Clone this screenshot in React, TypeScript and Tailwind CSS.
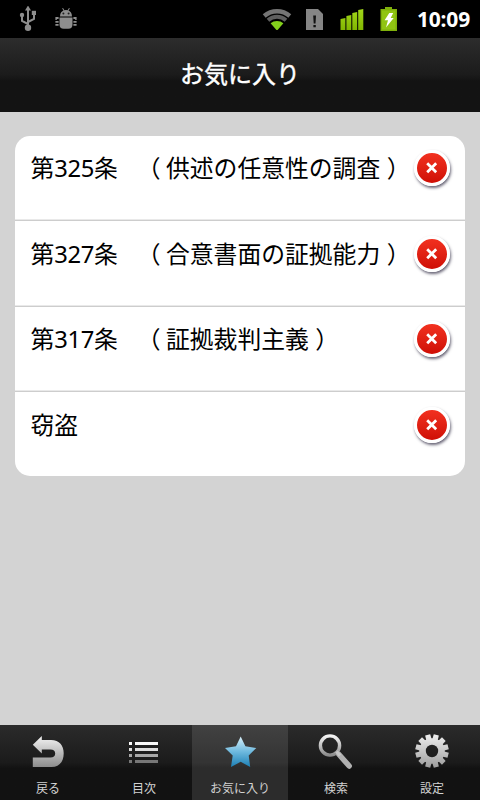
import React from 'react';

interface Favorite {
  id: string;
  prefix: string;
  number?: string;
  suffix?: string;
  title?: string;
}

const favorites: Favorite[] = [
  { id: '325', prefix: '第', number: '325', suffix: '条', title: '供述の任意性の調査' },
  { id: '327', prefix: '第', number: '327', suffix: '条', title: '合意書面の証拠能力' },
  { id: '317', prefix: '第', number: '317', suffix: '条', title: '証拠裁判主義' },
  { id: 'theft', prefix: '窃盗' },
];

const StatusBar: React.FC = () => (
  <div className="flex h-[38px] shrink-0 items-center bg-black">
    {/* USB */}
    <svg className="ml-[19px]" width="18" height="26" viewBox="0 0 18 26" fill="none" stroke="#8e8e8e" strokeWidth="2">
      <path d="M9 22V3M9 18L3 15V10M9 16L15 13V8" />
      <path d="M9 -.5L12 4.5H6Z" fill="#8e8e8e" stroke="none" />
      <circle cx="9" cy="21.7" r="3.2" fill="#8e8e8e" stroke="none" />
      <circle cx="3" cy="9" r="2.2" fill="#8e8e8e" stroke="none" />
      <path d="M12.8 4.8h4.2V9h-4.2Z" fill="#8e8e8e" stroke="none" />
    </svg>
    {/* Debug bug */}
    <svg className="ml-[18px]" width="22" height="22" viewBox="0 0 22 22" fill="#8e8e8e">
      <path d="M5 8.4C5 5 7 3 8.5 2.5L7.1 .6L8 0L9.4 2.2Q11 1.8 12.6 2.2L14 0L14.9 .6L13.5 2.5C15 3 17 5 17 8.4Z" />
      <path d="M4.5 9.4h13v7.1q0 4.2-4.2 4.2H8.7q-4.2 0-4.2-4.2Z" />
      <path d="M.4 9h3.2v1.9H1.8v1H.4ZM.4 13h3.2v1.8H.4ZM.4 16h3.2v1.8H.4ZM21.6 9h-3.2v1.9h1.8v1h1.4ZM18.4 13h3.2v1.8h-3.2ZM18.4 16h3.2v1.8h-3.2Z" />
      <circle cx="8.4" cy="5.6" r="1" fill="#222" />
      <circle cx="13.6" cy="5.6" r="1" fill="#222" />
    </svg>

    <div className="flex-1" />

    {/* Wifi */}
    <svg width="30" height="24" viewBox="0 0 30 24" fill="none">
      <path d="M2.2 9A19.5 19.5 0 0 1 27.8 9" stroke="#757575" strokeWidth="4.4" />
      <path d="M6 13.2A13.8 13.8 0 0 1 24 13.2" stroke="#5f5f5f" strokeWidth="4" />
      <path d="M8.6 16.2A10 10 0 0 1 21.4 16.2L16 22.6Q15 23.6 14 22.6Z" fill="#83d01c" />
    </svg>
    {/* SIM warning */}
    <svg className="ml-[14px]" width="17" height="21" viewBox="0 0 17 21">
      <path d="M0 0H12L17 5V21H0Z" fill="#858585" />
      <path d="M7.2 6.5h2.8l-.5 8H7.7ZM7.4 16h2.4v2.3H7.4Z" fill="#111" />
    </svg>
    {/* Signal */}
    <svg className="ml-[17px] overflow-visible" width="26" height="24" viewBox="0 0 26 24">
      <defs>
        <linearGradient id="signal" x1="0" y1="0" x2="0" y2="24" gradientUnits="userSpaceOnUse">
          <stop offset="0" stopColor="#a5dc1c" />
          <stop offset="1" stopColor="#80b400" />
        </linearGradient>
      </defs>
      <path
        d="M.5 12l4.9-1v12H.5ZM6.4 9l4.9-1v15H6.4ZM12.3 6l4.9-1v18h-4.9ZM18.2 3l5.1-1v21h-5.1Z"
        fill="url(#signal)"
      />
    </svg>
    {/* Battery */}
    <svg className="ml-[14px]" width="18" height="24" viewBox="0 0 18 24">
      <path d="M5 0h7v2h5v22H.5V2H5Z" fill="#7fb00b" />
      <path d="M2 3.5h13.5v19H2Z" fill="#90c412" />
      <path d="M9.3 6h3.9l-2.5 5h3L6 20.5l2-7.3H4.6Z" fill="#fff" />
    </svg>
    <span className="ml-[19px] mr-[8px] w-[55px] whitespace-nowrap font-['Noto_Sans','Open_Sans',sans-serif] text-[21px] font-bold leading-[38px] tracking-[-0.2px] text-white">
      10:09
    </span>
  </div>
);

const DeleteButton: React.FC = () => (
  <button
    className="mr-[15px] flex size-[36px] items-center justify-center rounded-full border-[3px] border-white bg-linear-to-b from-[#f2301f] to-[#cf0d05] shadow-[1px_2px_3px_rgba(40,35,60,0.7)]"
    aria-label="削除"
  >
    <svg width="12" height="12" viewBox="0 0 12 12" stroke="#fff" strokeWidth="2.8">
      <path d="M1.2 1.2L10.2 10.2M10.2 1.2L1.2 10.2" />
    </svg>
  </button>
);

const BackIcon = () => (
  <svg width="34" height="34" viewBox="0 0 34 34">
    <path d="M1.8 10.7L10.8 2V6H20C28.5 6 32.7 11.5 32.7 19.2C32.7 27.5 28.5 33 20.5 33H1.8V23.5H19.5C22.5 23.5 24.2 22 24.2 19.5C24.2 17 22.5 15.5 19.5 15.5H10.8V19.5Z" fill="url(#silver)" />
  </svg>
);

const ListIcon = () => (
  <svg width="34" height="34" viewBox="0 0 34 34">
    <path d="M2 8h3v3H2ZM8 8h23v3H8Z" fill="#fafafa" />
    <path d="M2 14h3v3H2ZM8 14h23v3H8Z" fill="#dedede" />
    <path d="M2 20h3v3H2ZM8 20h23v3H8Z" fill="#a8a8a8" />
    <path d="M2 26h3v3H2ZM8 26h23v3H8Z" fill="#777" />
  </svg>
);

const StarIcon = () => (
  <svg width="34" height="34" viewBox="0 0 34 34">
    <path d="M17.7 2.5L22.4 12.3L33.3 14L25.7 21.5L27.2 33L17.7 27.8L8 33L9.7 21.5L2 14L13 12.3Z" fill="url(#blue)" />
  </svg>
);

const SearchIcon = () => (
  <svg width="38" height="38" viewBox="0 0 38 38" fill="none">
    <circle cx="13" cy="13.5" r="9.6" stroke="url(#silver)" strokeWidth="3.4" />
    <path d="M22 22.5L32.2 34" stroke="#b0b0b0" strokeWidth="5.5" strokeLinecap="round" />
    <path d="M19.5 19.5L23 23.5" stroke="#c6c6c6" strokeWidth="3.4" />
  </svg>
);

const teeth = [15, 45, 75, 105, 135, 165, 195, 225, 255, 285, 315, 345];

const GearIcon = () => (
  <svg width="34" height="34" viewBox="-17 -17 34 34">
    <mask id="gear-hole" maskUnits="userSpaceOnUse" x="-17" y="-17" width="34" height="34">
      <circle r="12.8" fill="#fff" />
      {teeth.map((angle) => (
        <path key={angle} d="M-2.8-11L-2.6-16.7H2.6L2.8-11Z" fill="#fff" transform={`rotate(${angle})`} />
      ))}
      <circle r="6.2" fill="#000" />
    </mask>
    <rect x="-17" y="-17" width="34" height="34" fill="url(#gear)" mask="url(#gear-hole)" />
  </svg>
);

const tabs = [
  { label: '戻る', icon: <BackIcon /> },
  { label: '目次', icon: <ListIcon /> },
  { label: 'お気に入り', icon: <StarIcon />, active: true },
  { label: '検索', icon: <SearchIcon /> },
  { label: '設定', icon: <GearIcon /> },
];

const TabBar: React.FC = () => (
  <nav className="grid h-[75px] shrink-0 grid-cols-5 bg-linear-to-b from-[#2b2b2b] from-0% via-[#1b1b1b] via-50% to-[#121212] to-58%">
    {tabs.map((tab) => (
      <button
        key={tab.label}
        className={`flex flex-col items-center ${tab.active ? 'bg-white/11' : ''}`}
      >
        <span className="flex h-[54px] items-center justify-center pb-[2px]">{tab.icon}</span>
        <span className="whitespace-nowrap text-[12px] leading-[20px] text-[#d2d2d2]">
          {tab.label}
        </span>
      </button>
    ))}
  </nav>
);

export default function App() {
  return (
    <div className="flex h-[800px] w-[480px] flex-col overflow-hidden bg-[#d3d3d3] font-['Noto_Sans','Noto_Sans_CJK_JP',sans-serif]">
      {/* Shared icon gradients */}
      <svg className="absolute size-0">
        <defs>
          <linearGradient id="silver" x1="0" y1="0" x2="0" y2="1">
            <stop offset="0" stopColor="#f4f4f4" />
            <stop offset="1" stopColor="#8c8c8c" />
          </linearGradient>
          <linearGradient id="gear" x1="0" y1="0" x2="0" y2="1">
            <stop offset="0" stopColor="#f0f0f0" />
            <stop offset="1" stopColor="#9c9c9c" />
          </linearGradient>
          <linearGradient id="blue" x1="0" y1="0" x2="0" y2="1">
            <stop offset="0" stopColor="#d9f0fa" />
            <stop offset="0.5" stopColor="#6db9de" />
            <stop offset="1" stopColor="#1d80b5" />
          </linearGradient>
        </defs>
      </svg>

      <StatusBar />

      {/* Title */}
      <header className="flex h-[74px] shrink-0 items-center justify-center bg-linear-to-b from-[#2d2d2d] from-0% via-[#1b1b1b] via-50% to-[#131313] to-58% pb-[2px]">
        <h1 className="text-[24px] leading-[70px] text-white [-webkit-text-stroke:0.4px_white]">お気に入り</h1>
      </header>

      {/* Favorites */}
      <main className="flex-1 px-[15px] pt-6">
        <ul className="h-[340px] overflow-hidden rounded-[15px] bg-white">
          {favorites.map((item) => (
            <li
              key={item.id}
              className="flex h-[85.5px] items-start justify-between border-b border-[#cdcdcd] pl-[15.5px] pt-[14.5px] shadow-[inset_0_-1px_0_#e9e9e9] first:h-[85px] first:pt-[14px] last:border-b-0 last:shadow-none"
            >
              <span className="whitespace-pre text-[23.8px] leading-[36px] text-black">
                {item.prefix}
                {item.number && <span className="tracking-[-0.4px]">{item.number}</span>}
                {item.suffix}
                {item.title && (
                  <>
                    <span className="inline-block w-[24.5px]">{'　'}</span>
                    <span className="-ml-[5.5px] mr-[5.5px]">（</span>
                    {item.title}
                    <span className="-mr-[6.5px] ml-[6.5px]">）</span>
                  </>
                )}
              </span>
              <DeleteButton />
            </li>
          ))}
        </ul>
      </main>

      <TabBar />
    </div>
  );
}
